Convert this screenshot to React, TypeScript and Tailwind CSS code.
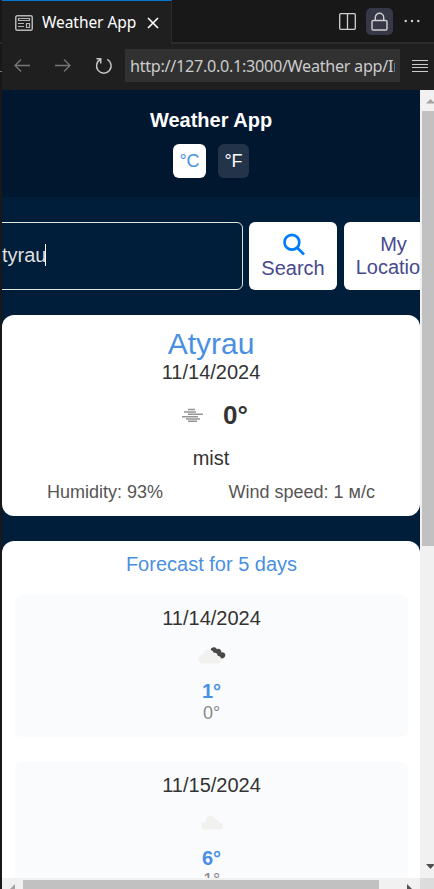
import React from "react";

const ui = "font-['Noto_Sans','Open_Sans',sans-serif]";

function TabBar() {
  return (
    <div className="flex h-11 shrink-0 bg-[#181818]">
      <div className={`flex h-11 w-[170px] shrink-0 items-center border-t border-r border-t-[#0078d4] border-r-[#2b2b2b] bg-[#1f1f1f] pl-[13px] ${ui}`}>
        <svg className="h-[18px] w-[18px] shrink-0" viewBox="0 0 18 18" fill="none" stroke="#b5b5b5">
          <rect x="0.75" y="1.75" width="16.5" height="14.5" rx="1.5" strokeWidth="1.5" />
          <path d="M3.500 4.500h11v2h-11zM11.500 9.500h3v4h-3zM3 9.500h6M3 12.500h6" strokeWidth="1.200" />
        </svg>
        <span className="ml-[9px] w-[94px] text-[15.5px] leading-none tracking-[-0.06px] whitespace-nowrap text-white">Weather App</span>
        <svg className="ml-[11px] h-3 w-3 shrink-0" viewBox="0 0 12 12" stroke="white" strokeWidth="1.6">
          <path d="M1 1l10 10M11 1L1 11" />
        </svg>
      </div>
      <div className="flex grow items-center justify-end border-b-2 border-[#2b2b2b] pr-[14px]">
        <svg className="mr-[10px] h-[17px] w-[17px]" viewBox="0 0 17 17" fill="none" stroke="#d0d0d0" strokeWidth="1.3">
          <rect x="0.7" y="0.7" width="15.6" height="15.6" rx="1" />
          <path d="M8.5 1v15" />
        </svg>
        <div className="flex h-[27px] w-[27px] items-center justify-center rounded-[5px] bg-[#363747]">
          <svg className="h-[19px] w-[17px]" viewBox="0 0 17 19" fill="none" stroke="#d0d0d0" strokeWidth="1.4">
            <rect x="1" y="8.5" width="15" height="9.5" rx="1.2" />
            <path d="M4.3 8.5V5.5a4.2 4.2 0 0 1 8.4 0v3" />
          </svg>
        </div>
        <svg className="ml-[11px] h-1 w-4" viewBox="0 0 16 4" fill="#d0d0d0">
          <circle cx="1.7" cy="2" r="1.2" />
          <circle cx="8" cy="2" r="1.2" />
          <circle cx="14.3" cy="2" r="1.2" />
        </svg>
      </div>
    </div>
  );
}

function AddressBar() {
  return (
    <div className="flex h-[46px] shrink-0 items-center bg-[#1f1f1f] pb-[3px]">
      <svg className="ml-3 h-[14px] w-4 shrink-0" viewBox="0 0 16 14" fill="none" stroke="#777777" strokeWidth="1.3">
        <path d="M16 6.500H1M7 0.500L1 6.500l6 6" />
      </svg>
      <svg className="ml-[25px] h-[14px] w-4 shrink-0" viewBox="0 0 16 14" fill="none" stroke="#777777" strokeWidth="1.3">
        <path d="M0 6.500h15M9 0.500l6 6-6 6" />
      </svg>
      <svg className="ml-6 h-[18px] w-[18px] shrink-0" viewBox="0 0 18 18" fill="none" stroke="#c5c5c5" strokeWidth="1.5">
        <path d="M1.500 1.800h4.200v4.700M5.700 2.300A7.300 7.300 0 1 0 12.200 2.400" />
      </svg>
      <div className={`ml-3 h-[33px] w-[275px] shrink-0 bg-[#313131] px-[5px] text-[16.2px] leading-[34px] tracking-[-0.29px] text-[#cccccc] ${ui}`}>
        <div className="overflow-hidden whitespace-nowrap">http://127.0.0.1:3000/Weather app/Index.html</div>
      </div>
      <svg className="ml-3 h-[14px] w-4 shrink-0" viewBox="0 0 16 14" stroke="#cccccc" strokeWidth="1.2">
        <path d="M0 1.500h16M0 5.500h16M0 8.500h16M0 12.500h16" />
      </svg>
    </div>
  );
}

function SearchRow() {
  return (
    <div className="mt-[25px] flex h-[68px] shrink-0 gap-[6px] text-xl leading-6 text-[#464a8c]">
      <div className="-ml-3 flex w-[253px] shrink-0 items-center rounded-md border border-[#e5e5dc] pl-[11px] text-[#dfdfdf]">
        <span className="pb-[2px]">tyrau</span>
        <span className="mb-[3px] -ml-px h-[22px] w-px bg-white" />
      </div>
      <div className="flex w-[88px] shrink-0 flex-col items-center rounded-md bg-white pt-[11px]">
        <svg className="ml-px h-[23px] w-[22px]" viewBox="0 0 22 23" fill="none" stroke="#007bff" strokeWidth="2.700">
          <circle cx="8.900" cy="9.200" r="7.400" />
          <path d="M14 14.500l7 7" />
        </svg>
        <span>Search</span>
      </div>
      <div className="ml-px w-[99px] shrink-0 rounded-md bg-white pt-[11px] text-center leading-[23px]">
        My<br />Location
      </div>
    </div>
  );
}

function CurrentWeather() {
  return (
    <div className="mt-[25px] flex h-[201px] shrink-0 flex-col items-center rounded-xl bg-white pt-3 text-[#333333]">
      <div className="text-[30px] leading-[34px] text-[#4a90e2]">Atyrau</div>
      <div className="text-xl leading-[23px]">11/14/2024</div>
      <div className="mt-4 flex h-[30px] w-full items-center pl-[180px]">
        <svg className="h-[14px] w-[21px]" viewBox="0 0 21 14" stroke="#949795" strokeWidth="1.400">
          <path d="M6 1.500h7M2 4h12M6 6.300h15M0 8.800h16M4 11h14M6 13.200h9" />
        </svg>
        <span className="ml-5 text-[26px] leading-[30px] font-bold">0°</span>
      </div>
      <div className="mt-4 text-xl leading-6">mist</div>
      <div className="mt-3 flex w-full justify-between pr-[45px] pl-[45px] text-[18px] leading-5 text-[#555555]">
        <span>Humidity: 93%</span>
        <span>Wind speed: 1 м/с</span>
      </div>
    </div>
  );
}

function BrokenClouds() {
  return (
    <svg className="h-[18px] w-7" viewBox="0 0 28 18">
      <path d="M12.500 4.500a3.400 3.400 0 0 1 6.500-1.300 3 3 0 0 1 4.300 3.300 2.900 2.900 0 0 1 3.900 3.500c-.8 2.400-3.600 3.200-5.500 1.500z" fill="#484848" />
      <path d="M4.500 17.500a4.300 4.300 0 0 1 .5-8.600C5.200 5.500 8 3.200 11 3.500c2.200.2 4 1.500 4.900 3.400 2-.8 3.800.8 3.700 2.800 3 .3 3.800 2.300 3.700 4 0 2.200-1.500 3.800-3.500 3.800z" fill="#f1f1ef" />
    </svg>
  );
}

function Cloud() {
  return (
    <svg className="h-[18px] w-[22px]" viewBox="0 0 22 18">
      <path d="M3.600 16.500A3.600 3.600 0 0 1 3.800 9.300H5C4.500 5.200 6.500 3 9.300 3S13 4.500 14 7c3-.8 4.300 1 4.200 3.100 2.600 0 4.100 1.200 4.100 3.200s-1.400 3.200-3.100 3.200z" fill="#f1f1ef" />
    </svg>
  );
}

function DayCard({ date, high, low, icon }: { date: string; high: string; low: string; icon: React.ReactNode }) {
  return (
    <div className="mb-[25px] flex h-[142px] shrink-0 flex-col items-center rounded-md bg-[#fafbfd] pt-3">
      <div className="text-xl leading-[23px] text-[#333333]">{date}</div>
      <div className="mt-[11px] flex h-7 items-center">{icon}</div>
      <div className="mt-[11px] text-xl leading-[23px] font-bold text-[#4a90e2]">{high}</div>
      <div className="text-[18px] leading-5 text-[#888888]">{low}</div>
    </div>
  );
}

function Page() {
  return (
    <div className="flex h-[788px] w-[418px] flex-col overflow-hidden bg-[#001d3a]">
      <header className="flex h-[107px] shrink-0 flex-col items-center bg-[#00172f] pt-[18px] text-white">
        <h1 className="text-xl leading-6 font-bold">Weather App</h1>
        <div className="mt-3 flex gap-3 text-[18px] leading-[34px]">
          <span className="h-[34px] w-[33px] rounded-md bg-white text-center text-[#4a90e2]">°C</span>
          <span className="h-[34px] w-[31px] rounded-md bg-[#233349] text-center">°F</span>
        </div>
      </header>
      <SearchRow />
      <CurrentWeather />
      <div className="mt-[25px] flex shrink-0 flex-col rounded-t-xl bg-white pr-3 pl-[13px] pt-3">
        <h2 className="mb-[19px] text-center text-xl leading-[23px] text-[#4a90e2]">Forecast for 5 days</h2>
        <DayCard date="11/14/2024" high="1°" low="0°" icon={<BrokenClouds />} />
        <DayCard date="11/15/2024" high="6°" low="1°" icon={<Cloud />} />
      </div>
    </div>
  );
}

export default function App() {
  return (
    <div className="flex h-[889px] w-[434px] overflow-hidden bg-[#181818] font-['Liberation_Sans',Arial,sans-serif]">
      <div className="flex w-[2px] shrink-0 flex-col">
        <div className="mt-[42px] h-[30px] border-t-2 border-b border-t-[#2b2b2b] border-b-[#777777]" />
      </div>
      <div className="flex w-[432px] shrink-0 flex-col">
        <TabBar />
        <AddressBar />
        <div className="flex">
          <Page />
          <div className="flex h-[788px] w-[14px] flex-col items-end overflow-hidden bg-[#f1f1f1]">
            <svg className="mt-2 h-[6px] w-2 shrink-0" viewBox="0 0 8 6" fill="#a3a3a3"><path d="M0 5.500L4.500 1 9 5.500z" /></svg>
            <div className="mt-[7px] h-[435px] w-3 shrink-0 bg-[#c1c1c1]" />
            <svg className="mt-auto mb-[9px] h-[5px] w-2 shrink-0" viewBox="0 0 8 5" fill="#505050"><path d="M0 0h9L4.500 5z" /></svg>
          </div>
        </div>
        <div className="flex h-[11px] bg-[#f1f1f1]">
          <svg className="mt-[6px] ml-2 h-[5px] w-[5px]" viewBox="0 0 5 5" fill="#a3a3a3"><path d="M5 0v5H0z" /></svg>
          <div className="mt-[2px] ml-2 h-[9px] w-[356px] bg-[#c1c1c1]" />
          <svg className="mt-[6px] ml-7 h-[5px] w-[5px]" viewBox="0 0 5 5" fill="#505050"><path d="M0 0v5h5z" /></svg>
          <div className="ml-auto h-[11px] w-[14px] bg-[#dcdcdc]" />
        </div>
      </div>
    </div>
  );
}
